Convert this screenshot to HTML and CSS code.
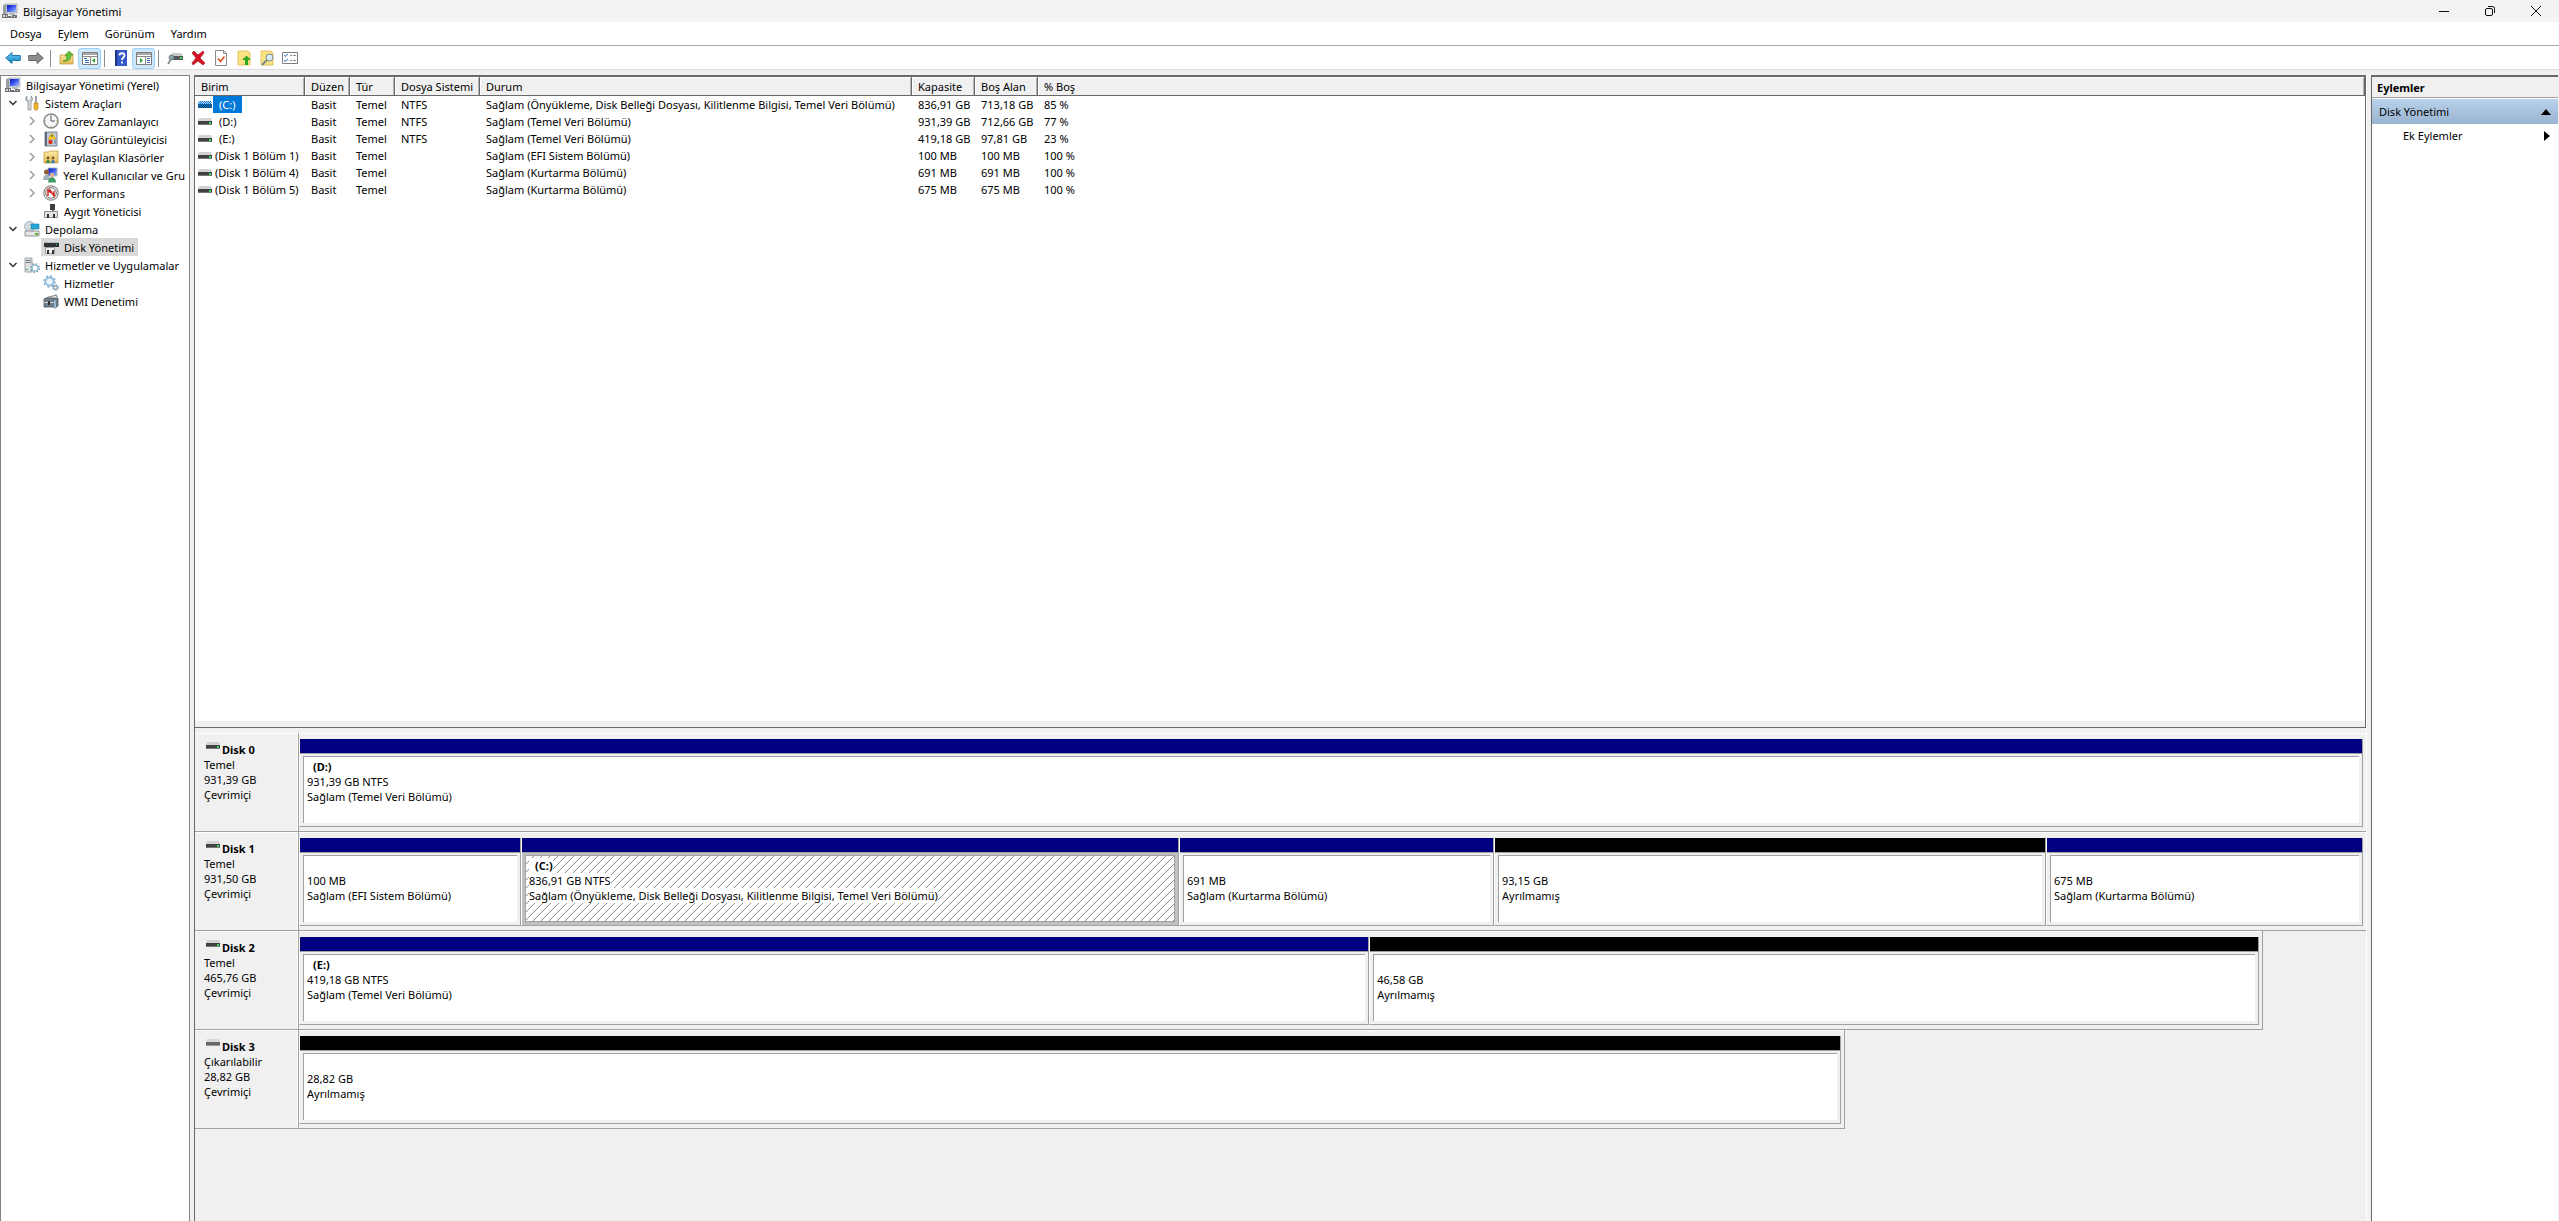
FILE: index.html
```html
<!DOCTYPE html>
<html lang="tr">
<head>
    <meta charset="UTF-8">
    <meta name="viewport" content="width=device-width, initial-scale=1.0">
    <title>Bilgisayar Yönetimi</title>
    <link rel="stylesheet" href="styles.css">
</head>
<body>
    <!-- shared icons -->
    <svg class="sprite" aria-hidden="true">
        <defs>
            <linearGradient id="g-blue" x1="0" y1="0" x2="0" y2="1">
                <stop offset="0" stop-color="#6fd0f5"/>
                <stop offset="1" stop-color="#0b7fc4"/>
            </linearGradient>
            <linearGradient id="g-screen" x1="0" y1="0" x2="1" y2="1">
                <stop offset="0" stop-color="#0a14b8"/>
                <stop offset="0.5" stop-color="#3f5cf0"/>
                <stop offset="1" stop-color="#a9c4ff"/>
            </linearGradient>
            <linearGradient id="g-folder" x1="0" y1="0" x2="0" y2="1">
                <stop offset="0" stop-color="#fbeaa6"/>
                <stop offset="1" stop-color="#e6bb52"/>
            </linearGradient>
            <pattern id="dots" width="2" height="2" patternUnits="userSpaceOnUse">
                <path d="M0 0h1v1H0zM1 1h1v1H1z" fill="#0078d7"/>
            </pattern>
        </defs>
        <symbol id="i-computer" viewBox="0 0 16 16">
            <path d="M1 2l3-1v10l-3 1z" fill="#9aa0a6"/>
            <path d="M4 1h11v9H4z" fill="#d9dce2" stroke="#8b8f98" stroke-width=".6"/>
            <path d="M5 2h9v7H5z" fill="url(#g-screen)"/>
            <path d="M8 10h4l1 2H7z" fill="#b4b7bd"/>
            <path d="M0 11h6v2h4v-1h5v3H0z" fill="#6d7176"/>
            <path d="M1 12h2v2H1zM4 12h1v2H4zM9 13h1v1H9zM12 13h1v1h-1z" fill="#d8dadd"/>
        </symbol>
        <symbol id="i-back" viewBox="0 0 16 16">
            <path d="M.7 8L7 2.5v3h8.300v5H7v3z" fill="url(#g-blue)" stroke="#1670a8" stroke-width=".9"/>
        </symbol>
        <symbol id="i-forward" viewBox="0 0 16 16">
            <path d="M15.300 8L9 2.500v3H.7v5H9v3z" fill="#8d8d8d" stroke="#5f5f5f" stroke-width=".9"/>
        </symbol>
        <symbol id="i-folder-up" viewBox="0 0 16 16">
            <path d="M1 5h5l1-1h7v10H1z" fill="url(#g-folder)" stroke="#b98f38" stroke-width=".7"/>
            <path d="M4 11c3 0 4-2 4-5H6l4-5 4 4h-2c0 5-4 7-8 6z" fill="#5fc23a" stroke="#378a1c" stroke-width=".6"/>
        </symbol>
        <symbol id="i-pane-left" viewBox="0 0 16 16">
            <path d="M.5 2.500h15v12H.5z" fill="#fff" stroke="#7d7d7d"/>
            <path d="M1 3h14v2H1z" fill="#a9a9a9"/>
            <path d="M1 6.500h14M8.500 6.500v8" stroke="#8a8a8a"/>
            <path d="M2 8.500h3M3 10.500h4M3 12.500h4" stroke="#3b6fb0"/>
            <path d="M13 8v5l-3-2.500z" fill="#2da52d"/>
        </symbol>
        <symbol id="i-pane-right" viewBox="0 0 16 16">
            <path d="M.5 2.500h15v12H.5z" fill="#fff" stroke="#7d7d7d"/>
            <path d="M1 3h14v2H1z" fill="#a9a9a9"/>
            <path d="M1 6.500h14M9.500 6.500v8" stroke="#8a8a8a"/>
            <path d="M11 8.500h3M11 10.500h3M11 12.500h3" stroke="#3b6fb0"/>
            <path d="M4 8v5l3-2.500z" fill="#2da52d"/>
        </symbol>
        <symbol id="i-help" viewBox="0 0 16 16">
            <path d="M2 0h12v16H2z" fill="#3558c8"/>
            <path d="M2 0h2v16H2z" fill="#1d357f"/>
            <path d="M6.500 5.500c0-3 5-3 5 0 0 2-2.500 2-2.500 4.500M9 11.500v2" fill="none" stroke="#fff" stroke-width="1.800"/>
        </symbol>
        <symbol id="i-probe" viewBox="0 0 16 16">
            <path d="M4 4l2-1h8l2 2v4H4z" fill="#c9cccf"/>
            <path d="M3 6h13v4H3z" fill="#55595c"/>
            <path d="M13 7h2v2h-2z" fill="#38e060"/>
            <circle cx="4.500" cy="7.500" r="2.500" fill="#8fa6b0" stroke="#5b6a72" stroke-width=".7"/>
            <path d="M4 9l-3 5" stroke="#7d8488" stroke-width="1.500"/>
        </symbol>
        <symbol id="i-delete" viewBox="0 0 16 16">
            <path d="M2 3l2-2 4 4 5-4 1 2-4 5 5 5-2 2-5-4-5 4-1-2 4-5z" fill="#d41224" stroke="#9c0a17" stroke-width=".6"/>
        </symbol>
        <symbol id="i-check-page" viewBox="0 0 16 16">
            <path d="M2.500.5h8l3 3v12h-11z" fill="#fff" stroke="#8a8a8a"/>
            <path d="M10.500.5v3h3" fill="none" stroke="#8a8a8a"/>
            <path d="M5 8.500l2.500 3 4-5" fill="none" stroke="#e0501c" stroke-width="1.600"/>
        </symbol>
        <symbol id="i-note-up" viewBox="0 0 16 16">
            <path d="M2 1h10l2 2v12H2z" fill="#fbe381" stroke="#d4b13e" stroke-width=".7"/>
            <path d="M10.500 5.500L15 10h-3v5H9v-5H6z" fill="#2fa524"/>
        </symbol>
        <symbol id="i-note-find" viewBox="0 0 16 16">
            <path d="M2 1h10l2 2v12H2z" fill="#fbe381" stroke="#d4b13e" stroke-width=".7"/>
            <circle cx="10.500" cy="7.500" r="3.500" fill="#d9ecf8" stroke="#7a868e"/>
            <path d="M8 10l-5 5" stroke="#7a868e" stroke-width="1.800"/>
        </symbol>
        <symbol id="i-options" viewBox="0 0 16 16">
            <path d="M.5 2.500h15v11H.5z" fill="#fff" stroke="#7d7d7d"/>
            <path d="M2 5l1 1.500L6 4M2 10l1 1.500L6 9" fill="none" stroke="#2f6fc0"/>
            <path d="M8 5.500h2M11 5.500h3M8 10.500h2M11 10.500h3" stroke="#8a8a8a"/>
        </symbol>
        <symbol id="i-tools" viewBox="0 0 16 16">
            <path d="M3 1v4l2 1 2-1V1c2 1 2 5 0 6v8H4V7C1 6 1 2 3 1z" fill="#d5d9dd" stroke="#83888d" stroke-width=".7"/>
            <path d="M11 1h2v7h-2z" fill="#9aa0a6"/>
            <path d="M10 8h4v6l-2 1.500-2-1.500z" fill="#f0b428" stroke="#b27e10" stroke-width=".6"/>
        </symbol>
        <symbol id="i-clock" viewBox="0 0 16 16">
            <circle cx="8" cy="8" r="7" fill="#f3f6f8" stroke="#8b8b8b" stroke-width="1.500"/>
            <path d="M8 3v5h4" fill="none" stroke="#555"/>
            <path d="M8 2v1M8 13v1M2 8h1M13 8h1" stroke="#e39a2a"/>
        </symbol>
        <symbol id="i-events" viewBox="0 0 16 16">
            <path d="M2 1h12v14H2z" fill="#c3ccda" stroke="#5d6a80" stroke-width=".8"/>
            <path d="M2 1h2v14H2z" fill="#5d6a80"/>
            <path d="M9 2l4 6H5z" fill="#ffd42e" stroke="#b38a00" stroke-width=".5"/>
            <path d="M9 4v2" stroke="#222"/>
            <circle cx="7.500" cy="11" r="2.200" fill="#d8321f"/>
            <path d="M11 10h2M11 12h2" stroke="#4c6aa8"/>
        </symbol>
        <symbol id="i-shared" viewBox="0 0 16 16">
            <path d="M1 3h5l1-1h8v12H1z" fill="url(#g-folder)" stroke="#b98f38" stroke-width=".7"/>
            <circle cx="5" cy="9" r="1.400" fill="#7b5230"/>
            <path d="M3 14c0-4 4-4 4 0z" fill="#3a8a3e"/>
            <circle cx="10" cy="9" r="1.400" fill="#7b5230"/>
            <path d="M8 14c0-4 4-4 4 0z" fill="#3f77b8"/>
        </symbol>
        <symbol id="i-users" viewBox="0 0 16 16">
            <path d="M6 1h9v8H6z" fill="url(#g-screen)" stroke="#a7adb8" stroke-width=".8"/>
            <circle cx="4.500" cy="5" r="2.500" fill="#8a5a33"/>
            <path d="M1 13c0-7 7-7 7 0z" fill="#9fb0bd"/>
            <circle cx="10" cy="8" r="2.200" fill="#e0b18b"/>
            <path d="M6 15.500c0-7 8-7 8 0z" fill="#3f9a63"/>
        </symbol>
        <symbol id="i-perf" viewBox="0 0 16 16">
            <circle cx="8" cy="8" r="7.200" fill="#fff" stroke="#8b8b8b" stroke-width="1.200"/>
            <circle cx="8" cy="8" r="5.300" fill="none" stroke="#444" stroke-width=".8"/>
            <path d="M5 11V5l2 2v-2l4 6V6" fill="none" stroke="#d01c1c" stroke-width="1.400"/>
        </symbol>
        <symbol id="i-device" viewBox="0 0 16 16">
            <path d="M7 1h5v6H7z" fill="#3b3e41"/>
            <path d="M9 7h2v2H9z" fill="#777"/>
            <path d="M1.500 8.500h13v6h-13z" fill="#e3e4e5" stroke="#8c8f92"/>
            <path d="M4 11h2v4H4zM10 11h2v4h-2z" fill="#333"/>
        </symbol>
        <symbol id="i-storage" viewBox="0 0 16 16">
            <circle cx="5.500" cy="5.500" r="5" fill="#d5dde2" stroke="#8c979e" stroke-width=".7"/>
            <circle cx="5.500" cy="5.500" r="1.500" fill="#fff" stroke="#8c979e" stroke-width=".5"/>
            <path d="M7 3h8v5H7z" fill="#27a8d8" stroke="#1676a0" stroke-width=".6"/>
            <path d="M1 10h14v5H1z" fill="#e4e6e8" stroke="#7f8487" stroke-width=".8"/>
            <path d="M11 12h3v2h-3z" fill="#5db32c"/>
        </symbol>
        <symbol id="i-diskmgmt" viewBox="0 0 16 16">
            <path d="M1 4l2-1h11l2 1v4H1z" fill="#303336"/>
            <path d="M1 3h14v1H1z" fill="#b9bcbf"/>
            <path d="M2.500 8.500h9v6h-9z" fill="#f3f3f3" stroke="#9a9c9e"/>
            <path d="M4 11h2v4H4zM9 11h2v4H9z" fill="#333"/>
            <path d="M13 5h1v1h-1z" fill="#38e060"/>
        </symbol>
        <symbol id="i-services-apps" viewBox="0 0 16 16">
            <path d="M1 1h7v14H1z" fill="#dfe2e4" stroke="#8c8f92" stroke-width=".8"/>
            <path d="M2 3.500h5M2 5.500h5" stroke="#777"/>
            <path d="M2 12h2v1H2z" fill="#3fb13f"/>
            <circle cx="11" cy="11" r="3" fill="#fff" stroke="#9cc3da" stroke-width="1.400"/>
            <circle cx="11" cy="11" r="4.300" fill="none" stroke="#6f93a8" stroke-width="1.200" stroke-dasharray="1.700 1.700"/>
        </symbol>
        <symbol id="i-gears" viewBox="0 0 16 16">
            <circle cx="6.500" cy="6.500" r="4" fill="#eef6fb" stroke="#8dbfe0" stroke-width="1.800"/>
            <circle cx="6.500" cy="6.500" r="5.600" fill="none" stroke="#6d9cbc" stroke-width="1.200" stroke-dasharray="2 2.400"/>
            <circle cx="12.500" cy="12.500" r="1.800" fill="#fff" stroke="#7a98ad" stroke-width="1.200"/>
            <circle cx="12.500" cy="12.500" r="2.900" fill="none" stroke="#7a98ad" stroke-width="1" stroke-dasharray="1.200 1.100"/>
        </symbol>
        <symbol id="i-wmi" viewBox="0 0 16 16">
            <path d="M4 6c0-3 6-2 9-4l1 2" fill="none" stroke="#8a9095" stroke-width="1.400"/>
            <path d="M1 6l2-1h12v8l-2 1H1z" fill="#6f7f8c" stroke="#47535c" stroke-width=".8"/>
            <path d="M1 9h12v1H1z" fill="#d4dade"/>
            <path d="M5 8h2v4H5z" fill="#333"/>
            <path d="M11 7h2v8h-2z" fill="#b9d5ea" stroke="#4d7799" stroke-width=".6"/>
        </symbol>
        <symbol id="i-disk" viewBox="0 0 14 8">
            <path d="M1 0h12l1 3H0z" fill="#d3d3d3"/>
            <path d="M0 3h14v4H0z" fill="#3f4244"/>
            <path d="M0 6h14v1H0z" fill="#777"/>
            <path d="M11 4h2v2h-2z" fill="#3be05c"/>
        </symbol>
        <symbol id="i-disk-off" viewBox="0 0 14 8">
            <path d="M1 0h12l1 3H0z" fill="#d9d9d9"/>
            <path d="M0 3h14v4H0z" fill="#666"/>
            <path d="M0 6h14v1H0z" fill="#999"/>
        </symbol>
        <symbol id="i-disk-selected" viewBox="0 0 14 8">
            <path d="M1 0h12l1 3H0z" fill="#b9d7ee"/>
            <path d="M0 3h14v4H0z" fill="#1f4463"/>
            <path d="M1 0h12l1 3v4H0V3z" fill="url(#dots)"/>
        </symbol>
        <symbol id="i-open" viewBox="0 0 10 10">
            <path d="M1.500 3L5 6.500 8.500 3" fill="none" stroke="#333" stroke-width="1.500"/>
        </symbol>
        <symbol id="i-closed" viewBox="0 0 10 10">
            <path d="M3 1l4 4-4 4" fill="none" stroke="#999" stroke-width="1.400"/>
        </symbol>
    </svg>

    <header class="titlebar">
        <svg class="icon"><use href="#i-computer"/></svg>
        <h1 class="title">Bilgisayar Yönetimi</h1>
        <div class="window-buttons">
            <button type="button" aria-label="Simge durumuna küçült">
                <svg viewBox="0 0 12 12"><path d="M1 6.500h10"/></svg>
            </button>
            <button type="button" aria-label="Önceki boyut">
                <svg viewBox="0 0 12 12"><rect x="1.500" y="3.500" width="7" height="7" rx="1.500"/><path d="M4 1.500h4.500a2 2 0 0 1 2 2V8"/></svg>
            </button>
            <button type="button" aria-label="Kapat">
                <svg viewBox="0 0 12 12"><path d="M1 1l10 10M11 1L1 11"/></svg>
            </button>
        </div>
    </header>

    <nav class="menubar">
        <button type="button">Dosya</button>
        <button type="button">Eylem</button>
        <button type="button">Görünüm</button>
        <button type="button">Yardım</button>
    </nav>

    <div class="toolbar">
        <button type="button" aria-label="Geri"><svg class="icon"><use href="#i-back"/></svg></button>
        <button type="button" aria-label="İleri"><svg class="icon"><use href="#i-forward"/></svg></button>
        <span class="separator"></span>
        <button type="button" aria-label="Yukarı"><svg class="icon"><use href="#i-folder-up"/></svg></button>
        <button type="button" class="pressed" aria-label="Konsol ağacı"><svg class="icon"><use href="#i-pane-left"/></svg></button>
        <span class="separator"></span>
        <button type="button" aria-label="Yardım"><svg class="icon"><use href="#i-help"/></svg></button>
        <button type="button" class="pressed" aria-label="Eylem bölmesi"><svg class="icon"><use href="#i-pane-right"/></svg></button>
        <span class="separator"></span>
        <button type="button" aria-label="Bağlan"><svg class="icon"><use href="#i-probe"/></svg></button>
        <button type="button" aria-label="Sil"><svg class="icon"><use href="#i-delete"/></svg></button>
        <button type="button" aria-label="Özellikler"><svg class="icon"><use href="#i-check-page"/></svg></button>
        <button type="button" aria-label="Aç"><svg class="icon"><use href="#i-note-up"/></svg></button>
        <button type="button" aria-label="Araştır"><svg class="icon"><use href="#i-note-find"/></svg></button>
        <button type="button" aria-label="Ayarlar"><svg class="icon"><use href="#i-options"/></svg></button>
    </div>

    <main class="workspace">
        <nav class="tree">
            <div class="row root"><span class="node"><svg class="icon"><use href="#i-computer"/></svg>Bilgisayar Yönetimi (Yerel)</span></div>
            <ul>
                <li>
                    <div class="row"><button type="button" class="expander" aria-label="Daralt"><svg><use href="#i-open"/></svg></button><span class="node"><svg class="icon"><use href="#i-tools"/></svg>Sistem Araçları</span></div>
                    <ul>
                        <li class="row"><button type="button" class="expander" aria-label="Genişlet"><svg><use href="#i-closed"/></svg></button><span class="node"><svg class="icon"><use href="#i-clock"/></svg>Görev Zamanlayıcı</span></li>
                        <li class="row"><button type="button" class="expander" aria-label="Genişlet"><svg><use href="#i-closed"/></svg></button><span class="node"><svg class="icon"><use href="#i-events"/></svg>Olay Görüntüleyicisi</span></li>
                        <li class="row"><button type="button" class="expander" aria-label="Genişlet"><svg><use href="#i-closed"/></svg></button><span class="node"><svg class="icon"><use href="#i-shared"/></svg>Paylaşılan Klasörler</span></li>
                        <li class="row"><button type="button" class="expander" aria-label="Genişlet"><svg><use href="#i-closed"/></svg></button><span class="node"><svg class="icon"><use href="#i-users"/></svg>Yerel Kullanıcılar ve Gru</span></li>
                        <li class="row"><button type="button" class="expander" aria-label="Genişlet"><svg><use href="#i-closed"/></svg></button><span class="node"><svg class="icon"><use href="#i-perf"/></svg>Performans</span></li>
                        <li class="row leaf"><span class="node"><svg class="icon"><use href="#i-device"/></svg>Aygıt Yöneticisi</span></li>
                    </ul>
                </li>
                <li>
                    <div class="row"><button type="button" class="expander" aria-label="Daralt"><svg><use href="#i-open"/></svg></button><span class="node"><svg class="icon"><use href="#i-storage"/></svg>Depolama</span></div>
                    <ul>
                        <li class="row leaf"><span class="node selected"><svg class="icon"><use href="#i-diskmgmt"/></svg>Disk Yönetimi</span></li>
                    </ul>
                </li>
                <li>
                    <div class="row"><button type="button" class="expander" aria-label="Daralt"><svg><use href="#i-open"/></svg></button><span class="node"><svg class="icon"><use href="#i-services-apps"/></svg>Hizmetler ve Uygulamalar</span></div>
                    <ul>
                        <li class="row leaf"><span class="node"><svg class="icon"><use href="#i-gears"/></svg>Hizmetler</span></li>
                        <li class="row leaf"><span class="node"><svg class="icon"><use href="#i-wmi"/></svg>WMI Denetimi</span></li>
                    </ul>
                </li>
            </ul>
        </nav>

        <section class="content">
            <div class="volumes">
                <table>
                    <colgroup>
                        <col class="col-volume">
                        <col class="col-short">
                        <col class="col-short">
                        <col class="col-fs">
                        <col class="col-status">
                        <col class="col-size">
                        <col class="col-size">
                        <col>
                    </colgroup>
                    <thead>
                        <tr><th>Birim</th><th>Düzen</th><th>Tür</th><th>Dosya Sistemi</th><th>Durum</th><th>Kapasite</th><th>Boş Alan</th><th>% Boş</th></tr>
                    </thead>
                    <tbody>
                        <tr><td><svg class="disk-icon"><use href="#i-disk-selected"/></svg><span class="letter selected">(C:)</span></td><td>Basit</td><td>Temel</td><td>NTFS</td><td>Sağlam (Önyükleme, Disk Belleği Dosyası, Kilitlenme Bilgisi, Temel Veri Bölümü)</td><td>836,91 GB</td><td>713,18 GB</td><td>85 %</td></tr>
                        <tr><td><svg class="disk-icon"><use href="#i-disk"/></svg><span class="letter">(D:)</span></td><td>Basit</td><td>Temel</td><td>NTFS</td><td>Sağlam (Temel Veri Bölümü)</td><td>931,39 GB</td><td>712,66 GB</td><td>77 %</td></tr>
                        <tr><td><svg class="disk-icon"><use href="#i-disk"/></svg><span class="letter">(E:)</span></td><td>Basit</td><td>Temel</td><td>NTFS</td><td>Sağlam (Temel Veri Bölümü)</td><td>419,18 GB</td><td>97,81 GB</td><td>23 %</td></tr>
                        <tr><td><svg class="disk-icon"><use href="#i-disk"/></svg><span class="name">(Disk 1 Bölüm 1)</span></td><td>Basit</td><td>Temel</td><td></td><td>Sağlam (EFI Sistem Bölümü)</td><td>100 MB</td><td>100 MB</td><td>100 %</td></tr>
                        <tr><td><svg class="disk-icon"><use href="#i-disk"/></svg><span class="name">(Disk 1 Bölüm 4)</span></td><td>Basit</td><td>Temel</td><td></td><td>Sağlam (Kurtarma Bölümü)</td><td>691 MB</td><td>691 MB</td><td>100 %</td></tr>
                        <tr><td><svg class="disk-icon"><use href="#i-disk"/></svg><span class="name">(Disk 1 Bölüm 5)</span></td><td>Basit</td><td>Temel</td><td></td><td>Sağlam (Kurtarma Bölümü)</td><td>675 MB</td><td>675 MB</td><td>100 %</td></tr>
                    </tbody>
                </table>
            </div>

            <div class="disks">
                <article class="disk">
                    <div class="disk-label">
                        <h2><svg class="disk-icon"><use href="#i-disk"/></svg>Disk 0</h2>
                        <p>Temel</p><p>931,39 GB</p><p>Çevrimiçi</p>
                    </div>
                    <div class="disk-area">
                        <div class="partitions" style="width: 100%">
                            <div class="partition" style="flex-grow: 1"><div class="box"><h3>(D:)</h3><p>931,39 GB NTFS</p><p>Sağlam (Temel Veri Bölümü)</p></div></div>
                        </div>
                    </div>
                </article>
                <article class="disk">
                    <div class="disk-label">
                        <h2><svg class="disk-icon"><use href="#i-disk"/></svg>Disk 1</h2>
                        <p>Temel</p><p>931,50 GB</p><p>Çevrimiçi</p>
                    </div>
                    <div class="disk-area">
                        <div class="partitions" style="width: 100%">
                            <div class="partition" style="flex-grow: 220"><div class="box"><h3></h3><p>100 MB</p><p>Sağlam (EFI Sistem Bölümü)</p></div></div>
                            <div class="partition active" style="flex-grow: 656"><div class="box"><h3>(C:)</h3><p>836,91 GB NTFS</p><p>Sağlam (Önyükleme, Disk Belleği Dosyası, Kilitlenme Bilgisi, Temel Veri Bölümü)</p></div></div>
                            <div class="partition" style="flex-grow: 313"><div class="box"><h3></h3><p>691 MB</p><p>Sağlam (Kurtarma Bölümü)</p></div></div>
                            <div class="partition free" style="flex-grow: 550"><div class="box"><h3></h3><p>93,15 GB</p><p>Ayrılmamış</p></div></div>
                            <div class="partition" style="flex-grow: 315"><div class="box"><h3></h3><p>675 MB</p><p>Sağlam (Kurtarma Bölümü)</p></div></div>
                        </div>
                    </div>
                </article>
                <article class="disk">
                    <div class="disk-label">
                        <h2><svg class="disk-icon"><use href="#i-disk"/></svg>Disk 2</h2>
                        <p>Temel</p><p>465,76 GB</p><p>Çevrimiçi</p>
                    </div>
                    <div class="disk-area">
                        <div class="partitions partial" style="width: 95%">
                            <div class="partition" style="flex-grow: 1070"><div class="box"><h3>(E:)</h3><p>419,18 GB NTFS</p><p>Sağlam (Temel Veri Bölümü)</p></div></div>
                            <div class="partition free" style="flex-grow: 889"><div class="box"><h3></h3><p>46,58 GB</p><p>Ayrılmamış</p></div></div>
                        </div>
                    </div>
                </article>
                <article class="disk">
                    <div class="disk-label">
                        <h2><svg class="disk-icon"><use href="#i-disk-off"/></svg>Disk 3</h2>
                        <p>Çıkarılabilir</p><p>28,82 GB</p><p>Çevrimiçi</p>
                    </div>
                    <div class="disk-area">
                        <div class="partitions partial" style="width: 74.8%">
                            <div class="partition free" style="flex-grow: 1"><div class="box"><h3></h3><p>28,82 GB</p><p>Ayrılmamış</p></div></div>
                        </div>
                    </div>
                </article>
            </div>
        </section>

        <aside class="actions">
            <h2>Eylemler</h2>
            <button type="button" class="group">Disk Yönetimi<svg viewBox="0 0 10 6"><path d="M0 6l5-6 5 6z"/></svg></button>
            <button type="button" class="item">Ek Eylemler<svg viewBox="0 0 6 10"><path d="M0 0l6 5-6 5z"/></svg></button>
        </aside>
    </main>
</body>
</html>
```

FILE: styles.css
```css
* {
    box-sizing: border-box;
}
body {
    margin: 0;
    height: 100vh;
    display: flex;
    flex-direction: column;
    overflow: hidden;
    font-family: "Noto Sans", "Open Sans", sans-serif;
    font-size: 11px;
    line-height: 15px;
    background-color: #f0f0f0;
    color: #000;
}
h1, h2, h3, p, ul {
    margin: 0;
    padding: 0;
    font-size: 11px;
}
ul {
    list-style: none;
}
button {
    font: inherit;
    color: inherit;
    background: none;
    border: 0;
    padding: 0;
}
svg {
    display: block;
    flex: none;
}
.sprite {
    position: absolute;
    width: 0;
    height: 0;
}
.icon {
    width: 16px;
    height: 16px;
}
.disk-icon {
    width: 14px;
    height: 8px;
}

/* title, menu and tool bars */
.titlebar {
    display: flex;
    align-items: center;
    gap: 5px;
    height: 22px;
    padding-left: 2px;
    background-color: #f3f3f3;
}
.title {
    flex: 1;
    font-weight: normal;
}
.window-buttons {
    display: flex;
}
.window-buttons button {
    display: flex;
    align-items: center;
    justify-content: center;
    width: 46px;
    height: 20px;
}
.window-buttons svg {
    width: 12px;
    height: 12px;
    fill: none;
    stroke: #111;
}
.menubar {
    display: flex;
    height: 24px;
    padding: 0 0 1px 2px;
    background-color: #fff;
    border-bottom: 1px solid #a8a8a8;
}
.menubar button {
    padding: 0 8px;
}
.toolbar {
    display: flex;
    align-items: center;
    height: 24px;
    padding: 1px 0 0 1px;
    background-color: #fff;
    border-bottom: 1px solid #dcdcdc;
}
.toolbar button {
    display: flex;
    align-items: center;
    justify-content: center;
    width: 23px;
    height: 21px;
}
.toolbar .pressed {
    background-color: #cce8ff;
    border: 1px solid #99d1ff;
    border-radius: 3px;
}
.separator {
    width: 1px;
    height: 17px;
    margin: 0 4px 0 3px;
    background-color: #8d8d8d;
}

.workspace {
    flex: 1;
    display: flex;
    gap: 4px;
    min-height: 0;
    padding: 5px 1px 0 0;
}

/* console tree */
.tree {
    width: 190px;
    overflow: hidden;
    background-color: #fff;
    border: 1px solid #828282;
    border-width: 1px 1px 0;
}
.row {
    display: flex;
    align-items: center;
    height: 18px;
    padding-left: 3px;
}
.root {
    padding-left: 2px;
}
.tree ul ul {
    padding-left: 19px;
}
.tree .leaf {
    padding-left: 21px;
}
.expander {
    display: flex;
    align-items: center;
    justify-content: center;
    width: 18px;
    height: 18px;
}
.expander svg {
    width: 10px;
    height: 10px;
}
.node {
    display: flex;
    align-items: center;
    gap: 5px;
    height: 18px;
    padding: 0 4px 0 2px;
    white-space: nowrap;
}
.node.selected {
    background-color: #d9d9d9;
}

/* volume list */
.content {
    flex: 1;
    display: flex;
    flex-direction: column;
    min-width: 0;
    border-left: 1px solid #696969;
    border-right: 1px solid #fff;
}
.volumes {
    flex: 4 1 0;
    overflow: hidden;
    background-color: #fff;
    border: 1px solid #696969;
    border-width: 2px 1px 1px 0;
    box-shadow: inset 0 -6px #f0f0f0;
}
.volumes table {
    width: 100%;
    table-layout: fixed;
    border-collapse: separate;
    border-spacing: 0;
}
.volumes th {
    height: 19px;
    padding: 0 0 0 6px;
    font-weight: normal;
    text-align: left;
    white-space: nowrap;
    background-color: #f0f0f0;
    border-right: 1px solid #696969;
    border-bottom: 1px solid #696969;
    box-shadow: inset 1px 1px #fff, inset -1px 0 #b4b4b4;
}
.volumes td {
    height: 17px;
    padding: 0 0 0 6px;
    white-space: nowrap;
}
.volumes td:first-child {
    display: flex;
    align-items: center;
    padding-left: 3px;
}
.col-volume {
    width: 110px;
}
.col-short {
    width: 45px;
}
.col-fs {
    width: 85px;
}
.col-status {
    width: 432px;
}
.col-size {
    width: 63px;
}
.letter {
    line-height: 17px;
    margin-left: 1px;
    padding: 0 6px 0 6px;
}
.letter.selected {
    background-color: #0078d7;
    color: #fff;
}
.name {
    padding-left: 3px;
}

/* graphical view */
.disks {
    flex: 3 1 0;
    overflow: hidden;
    padding-top: 5px;
}
.disk {
    display: flex;
    height: 99px;
}
.disk-label {
    width: 104px;
    padding: 9px 0 0 9px;
    border: 1px solid #a0a0a0;
    border-width: 0 1px 1px 0;
    box-shadow: inset 0 1px #fff, inset -1px 0 #fff;
}
.disk-label h2 {
    display: flex;
    gap: 2px;
    padding-left: 2px;
}
.disk-area {
    flex: 1;
    display: flex;
    min-width: 0;
}
.partitions {
    display: flex;
    padding: 6px 3px 4px 0;
    border-bottom: 1px solid #a0a0a0;
    box-shadow: inset 0 1px #fff;
}
.partitions.partial {
    border-right: 1px solid #a0a0a0;
}
.partition {
    flex: 1 1 0;
    display: flex;
    flex-direction: column;
    min-width: 0;
    border: 1px solid #a0a0a0;
    border-top: 0;
    border-left-color: #fff;
}
.partition::before {
    content: "";
    height: 14px;
    background-color: #000080;
    border-bottom: 1px solid #a0a0a0;
}
.partition.free::before {
    background-color: #000;
}
.box {
    flex: 1;
    margin: 2px 3px 3px;
    padding: 2px 0 0 3px;
    overflow: hidden;
    white-space: nowrap;
    background-color: #fff;
    border-top: 1px solid #a0a0a0;
    border-left: 1px solid #a0a0a0;
}
.box h3 {
    height: 15px;
    padding-left: 6px;
}
.active {
    background-color: #c0c0c0;
}
.active .box {
    background-image: linear-gradient(135deg, transparent 46%, #909090 46%, #909090 54%, transparent 54%);
    background-size: 8px 8px;
    border: 1px solid #a0a0a0;
}
.active h3, .active p {
    width: fit-content;
    background-color: #fff;
}

/* actions pane */
.actions {
    width: 187px;
    background-color: #fff;
    border-top: 2px solid #696969;
    border-left: 1px solid #696969;
}
.actions h2 {
    height: 21px;
    padding-left: 5px;
    line-height: 21px;
    background-color: #f0f0f0;
    border-bottom: 1px solid #a0a0a0;
}
.actions button {
    display: flex;
    align-items: center;
    justify-content: space-between;
    width: 100%;
    height: 25px;
}
.actions .group {
    margin-top: 1px;
    padding: 0 7px;
    background: linear-gradient(#b9d1ea, #99b4d1);
}
.group svg {
    width: 10px;
    height: 6px;
}
.actions .item {
    height: 23px;
    padding: 0 8px 0 31px;
}
.item svg {
    width: 6px;
    height: 10px;
}
```
